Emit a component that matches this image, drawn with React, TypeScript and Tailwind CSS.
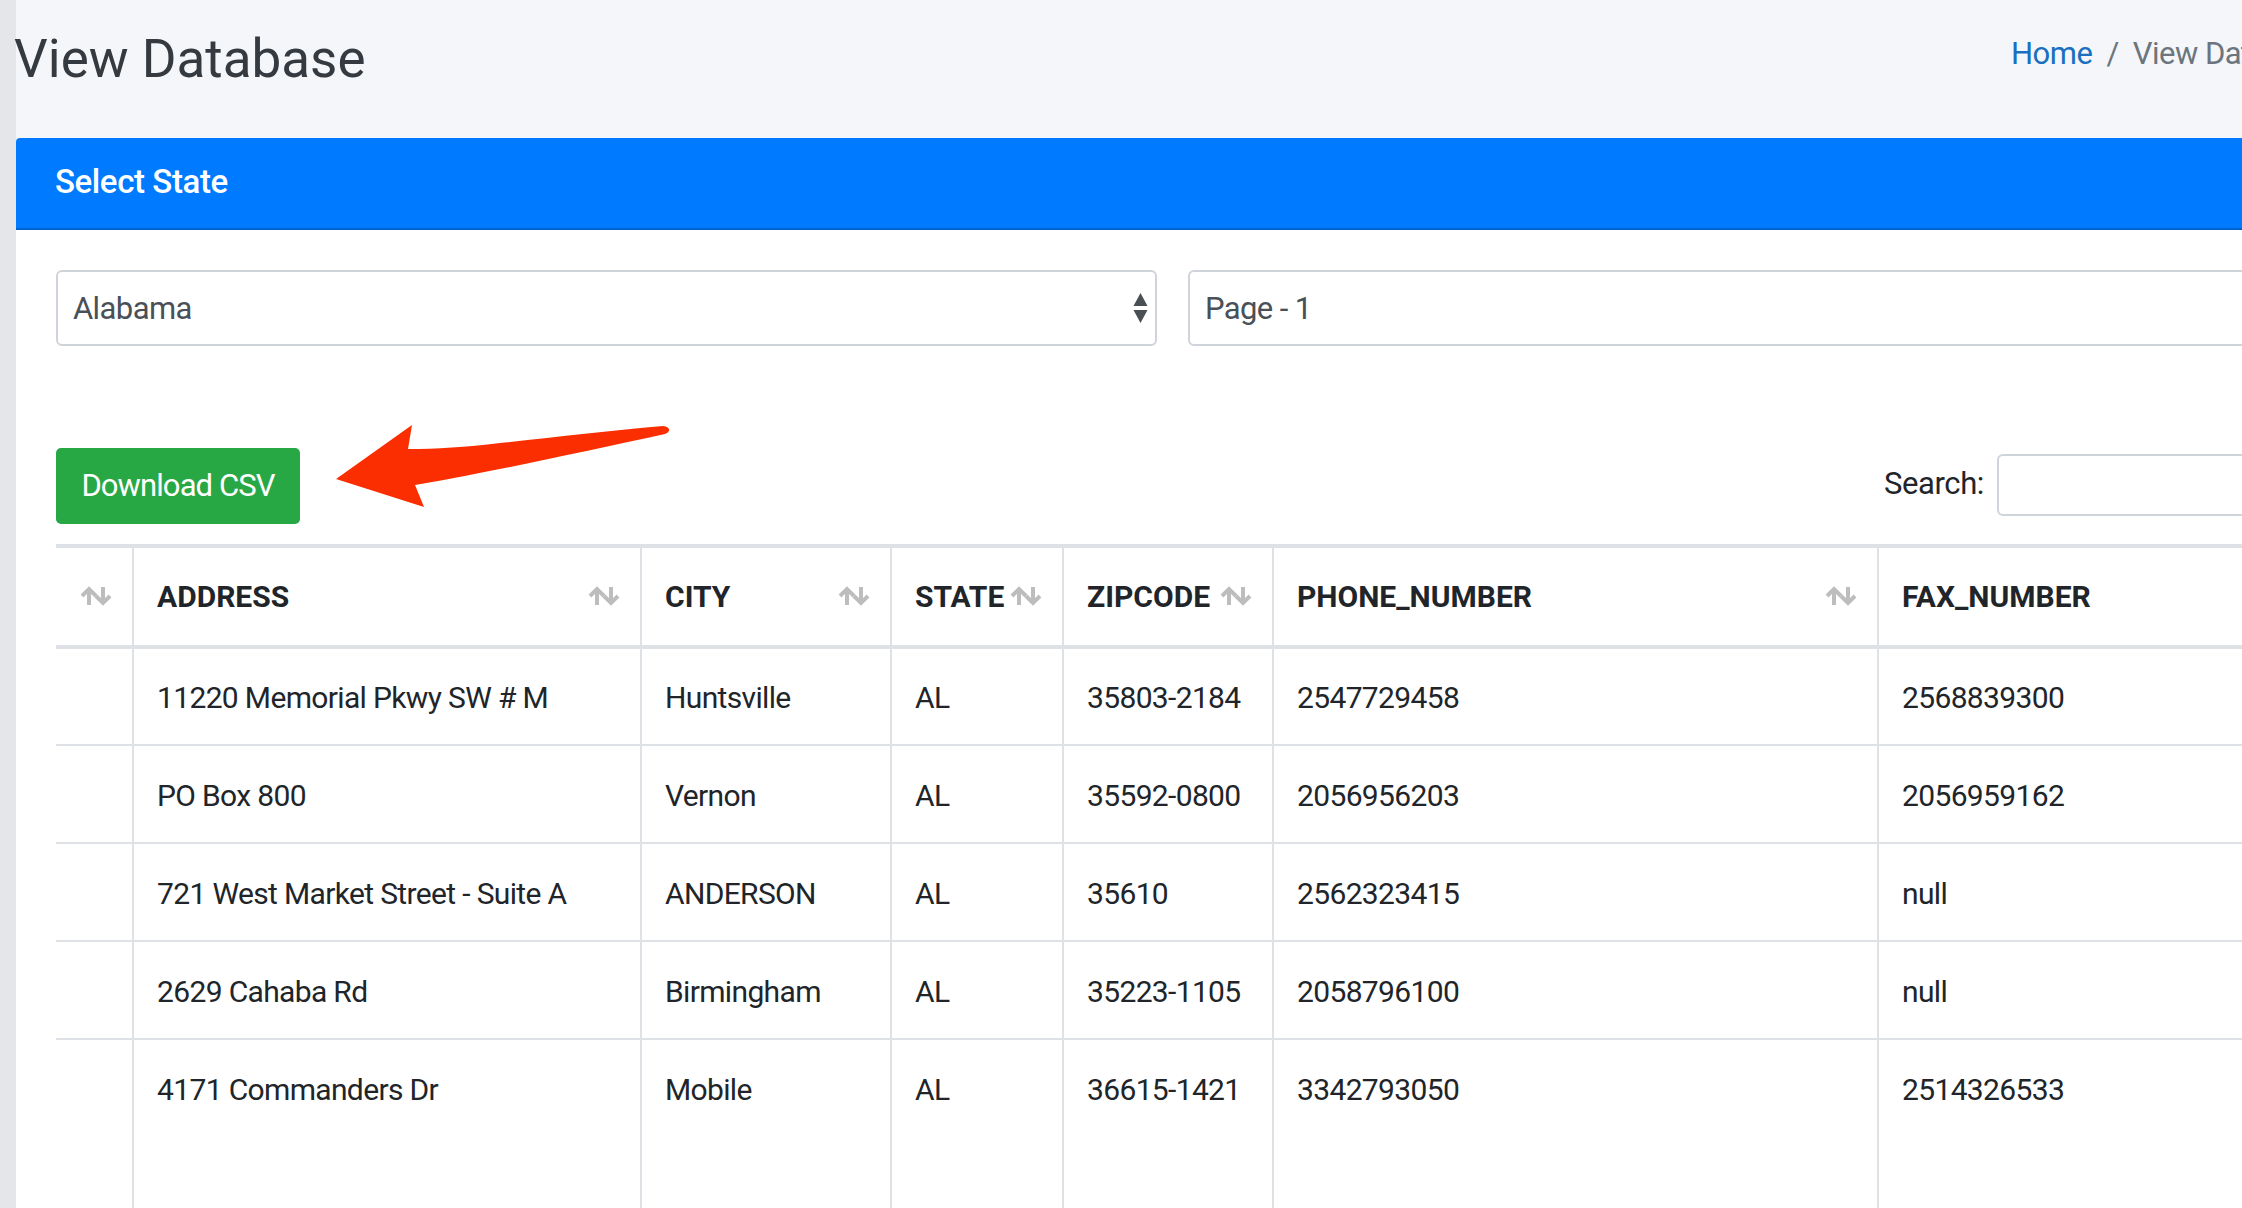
const rows = [
  ["11220 Memorial Pkwy SW # M", "Huntsville", "AL", "35803-2184", "2547729458", "2568839300"],
  ["PO Box 800", "Vernon", "AL", "35592-0800", "2056956203", "2056959162"],
  ["721 West Market Street - Suite A", "ANDERSON", "AL", "35610", "2562323415", "null"],
  ["2629 Cahaba Rd", "Birmingham", "AL", "35223-1105", "2058796100", "null"],
  ["4171 Commanders Dr", "Mobile", "AL", "36615-1421", "3342793050", "2514326533"],
];

const columns = [
  { label: "", width: "w-[77px]", sort: true },
  { label: "ADDRESS", width: "w-[508px]", sort: true },
  { label: "CITY", width: "w-[250px]", sort: true },
  { label: "STATE", width: "w-[172px]", sort: true },
  { label: "ZIPCODE", width: "w-[210px]", sort: true },
  { label: "PHONE_NUMBER", width: "w-[605px]", sort: true },
  { label: "FAX_NUMBER", width: "w-[500px]", sort: false },
];

function SortIcon() {
  return (
    <svg
      viewBox="0 0 34 20"
      className="absolute right-[19px] top-[38px] h-[20px] w-[34px] text-[#bdbdbd]"
      fill="none"
      stroke="currentColor"
      strokeWidth="4"
    >
      <path d="M10 19V3M3 10l7-7 7 7" />
      <path d="M24 1v16M17 10l7 7 7-7" />
    </svg>
  );
}

function SelectArrows() {
  return (
    <svg viewBox="0 0 15 30" className="h-[30px] w-[15px] text-[#4a4f54]" fill="currentColor">
      <path d="M7.5 0l7 13H.5z" />
      <path d="M7.5 30L.5 17h14z" />
    </svg>
  );
}

export default function App() {
  return (
    <div className="h-[1208px] w-[2242px] overflow-hidden bg-[#f4f6f9] font-['Roboto',sans-serif] text-[#212529]">
      <div className="flex h-full">
        <div className="w-[16px] shrink-0 bg-[#e4e6ea]" />
        <div className="w-[2400px] shrink-0">
          {/* Page heading */}
          <div className="flex h-[138px] justify-between">
            <h1 className="-ml-[2px] pt-[28px] text-[53px] leading-[62px] text-[#343a40]">View Database</h1>
            <div className="flex w-[405px] gap-[14px] pt-[35px] text-[31px] leading-[38px] tracking-[-0.5px]">
              <span className="text-[#1a6fc0]">Home</span>
              <span className="text-[#6c757d]">/</span>
              <span className="whitespace-nowrap text-[#6c757d]">View Database</span>
            </div>
          </div>

          {/* Card */}
          <div className="h-[1070px] bg-white">
            <div className="flex h-[92px] items-center rounded-tl-[4px] border-b-2 border-[#0062cc] bg-[#007bff] pb-[3px] pl-[39px] text-[33px] font-medium tracking-[-0.4px] text-white">
              Select State
            </div>

            <div className="pl-[40px] pt-[40px]">
              <div className="flex gap-[31px] text-[31px] tracking-[-0.6px] text-[#495057]">
                <div className="flex h-[76px] w-[1101px] items-center justify-between rounded-[6px] border-2 border-[#ced4da] pl-[15px] pr-[7px]">
                  <span className="pt-[2px]">Alabama</span>
                  <SelectArrows />
                </div>
                <div className="flex h-[76px] w-[1200px] items-center rounded-[6px] border-2 border-[#ced4da] pl-[15px]">
                  <span className="pt-[2px]">Page - 1</span>
                </div>
              </div>

              <div className="mt-[102px] flex w-[2244px] items-center">
                <button className="h-[76px] w-[244px] rounded-[5px] bg-[#28a745] text-[31px] tracking-[-0.9px] text-white">
                  Download CSV
                </button>
                <svg viewBox="0 0 340 90" className="ml-[36px] -mt-[32px] h-[90px] w-[340px]">
                  <path
                    d="M0 54 L76 0 L72 24 C100 24 130 22 164 18 C220 12 270 6 327 1 Q334 2 333 6 Q332 8 329 9 C250 26 170 44 79 60 L88 82 Z"
                    fill="#fb2e01"
                  />
                </svg>
                <div className="ml-auto flex w-[416px] items-center">
                  <span className="w-[113px] pb-[4px] text-[31px] tracking-[-0.4px]">Search:</span>
                  <div className="-mt-[2px] h-[62px] w-[303px] rounded-[6px] border-2 border-[#ced4da]" />
                </div>
              </div>

              <table className="mt-[20px] table-fixed border-collapse text-[30px]">
                <thead>
                  <tr className="h-[101px] border-y-4 border-[#dee2e6]">
                    {columns.map((col) => (
                      <th
                        key={col.label}
                        className={`relative ${col.width} border-r-2 border-[#dee2e6] pl-[23px] text-left font-bold last:border-r-0`}
                      >
                        {col.label}
                        {col.sort && <SortIcon />}
                      </th>
                    ))}
                  </tr>
                </thead>
                <tbody className="tracking-[-0.65px]">
                  {rows.map((row, i) => (
                    <tr key={row[0]} className="border-b-2 border-[#dee2e6] last:border-b-0">
                      <td className={`${i === 4 ? "h-[200px]" : "h-[98px]"} border-r-2 border-[#dee2e6]`} />
                      {row.map((cell, c) => (
                        <td
                          key={c}
                          className={`border-r-2 border-[#dee2e6] pl-[23px] last:border-r-0 ${i === 4 ? "pt-[27px] align-top" : "pt-[2px]"}`}
                        >
                          {cell}
                        </td>
                      ))}
                    </tr>
                  ))}
                </tbody>
              </table>
            </div>
          </div>
        </div>
      </div>
    </div>
  );
}
